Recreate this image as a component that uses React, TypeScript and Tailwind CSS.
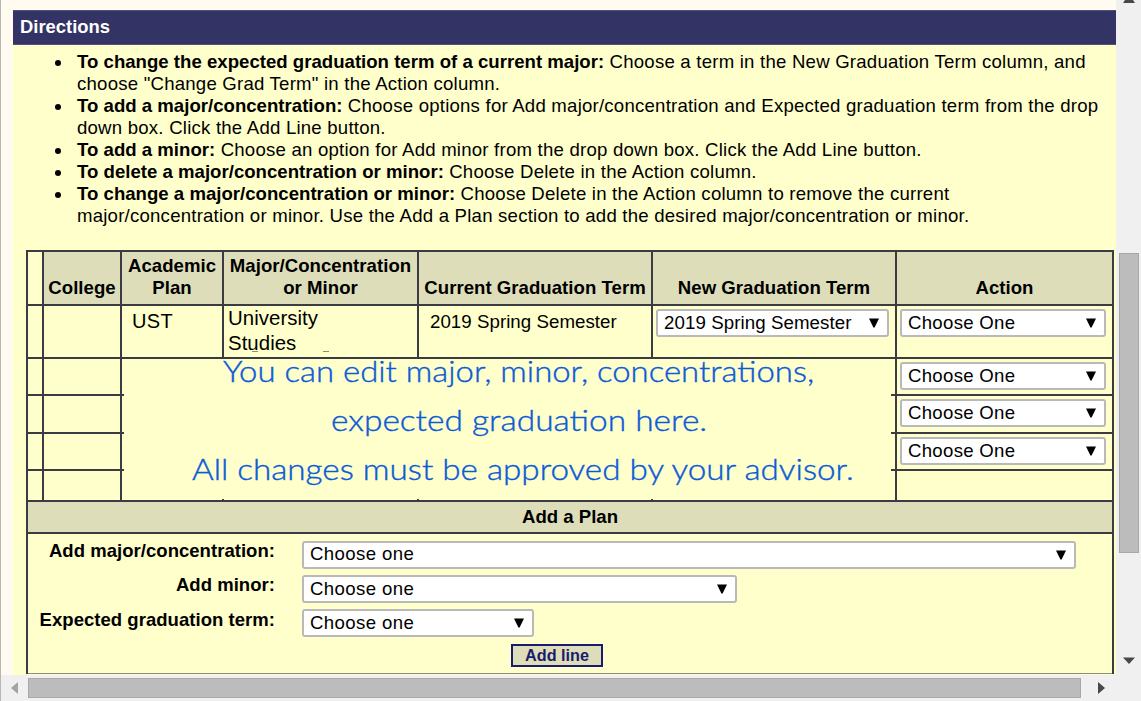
import type { ReactNode } from "react";

function Select({ label, className }: { label: string; className: string }) {
  return (
    <div
      className={`flex h-7 shrink-0 items-center justify-between rounded-[3px] border-2 border-[#b9b9b9] bg-white pl-1.5 pr-2 ${className}`}
    >
      <span className="-mt-px whitespace-nowrap">{label}</span>
      <svg width="10" height="10" viewBox="0 0 10 10">
        <path d="M0 0.5H10L5.6 9.5H4.4Z" fill="#000" />
      </svg>
    </div>
  );
}

function Cell({ className, children }: { className: string; children?: ReactNode }) {
  return <div className={`shrink-0 border-r-2 border-[#3b3b44] ${className}`}>{children}</div>;
}

const headerCell =
  "flex items-end justify-center bg-[#dddeb9] pb-[5px] text-center font-bold text-[18.6px] tracking-[0.03px]";

function Item({ title, children }: { title: string; children: ReactNode }) {
  return (
    <li className="relative whitespace-nowrap">
      <span className="absolute -left-[22px] top-[9px] size-1.5 rounded-full bg-black" />
      <b className="tracking-[0.01px]">{title}</b> {children}
    </li>
  );
}

function EmptyRow({ height, select }: { height: string; select: boolean }) {
  return (
    <div className={`flex border-b-2 border-[#3b3b44] ${height}`}>
      <Cell className="w-4" />
      <Cell className="w-[78px]" />
      <Cell className="w-[102px]" />
      <Cell className="w-[195px]" />
      <Cell className="w-[234px]" />
      <Cell className="w-[244px]" />
      <div className="flex-1 pl-[3px] pt-[3px] tracking-[0.3px]">
        {select && <Select label="Choose One" className="w-[206px]" />}
      </div>
    </div>
  );
}

function FormRow({ label, width }: { label: string; width: string }) {
  return (
    <div className="flex h-[34.4px]">
      <div className="-mt-px w-[247px] shrink-0 text-right text-[18.5px] font-bold tracking-[0.04px]">{label}</div>
      <div className="-mt-[0.4px] pl-[27px] tracking-[0.4px]">
        <Select label="Choose one" className={width} />
      </div>
    </div>
  );
}

export default function App() {
  return (
    <div className="flex h-[701px] w-[1141px] flex-col overflow-hidden border-l border-[#b8b8b0] bg-[#fffbf0] font-['Liberation_Sans',Arial,sans-serif] text-[18.6px] leading-[22px] tracking-[0.22px] text-black">
      <div className="flex h-[675px]">
        <main className="flex w-[1115px] shrink-0 flex-col overflow-hidden pl-3 pt-2.5">
          <div className="flex h-[35px] w-[1103px] shrink-0 items-center border-y border-[#50507c] bg-[#333366] pb-px pl-[7px] text-[18.4px] font-bold tracking-normal text-white">
            Directions
          </div>
          <section className="w-[1103px] flex-1 bg-[#ffffcc] pl-[13px] pt-1.5">
            <ul className="h-[199px] pl-[51px]">
              <Item title="To change the expected graduation term of a current major:">
                Choose a term in the New Graduation Term column, and
                <br />
                choose "Change Grad Term" in the Action column.
              </Item>
              <Item title="To add a major/concentration:">
                Choose options for Add major/concentration and Expected graduation term from the drop
                <br />
                down box. Click the Add Line button.
              </Item>
              <Item title="To add a minor:">
                Choose an option for Add minor from the drop down box. Click the Add Line button.
              </Item>
              <Item title="To delete a major/concentration or minor:">Choose Delete in the Action column.</Item>
              <Item title="To change a major/concentration or minor:">
                Choose Delete in the Action column to remove the current
                <br />
                major/concentration or minor. Use the Add a Plan section to add the desired major/concentration or minor.
              </Item>
            </ul>

            <div className="relative w-[1088px] border-x-2 border-t-2 border-[#3b3b44]">
              <div className="flex h-[54px] border-b-2 border-[#3b3b44]">
                <Cell className="w-4" />
                <Cell className={`w-[78px] ${headerCell}`}>College</Cell>
                <Cell className={`w-[102px] ${headerCell}`}>
                  Academic
                  <br />
                  Plan
                </Cell>
                <Cell className={`w-[195px] ${headerCell}`}>
                  Major/Concentration
                  <br />
                  or Minor
                </Cell>
                <Cell className={`w-[234px] ${headerCell}`}>Current Graduation Term</Cell>
                <Cell className={`w-[244px] ${headerCell}`}>New Graduation Term</Cell>
                <div className={`flex-1 ${headerCell}`}>Action</div>
              </div>

              <div className="flex h-[53px] border-b-2 border-[#3b3b44]">
                <Cell className="w-4" />
                <Cell className="w-[78px]" />
                <Cell className="w-[102px] pl-[10px] pt-[4px] text-[20px] tracking-[0.3px]">UST</Cell>
                <Cell className="w-[195px] pl-1 text-[20.4px] leading-[25px] tracking-[0.05px]">
                  University
                  <br />
                  Studies
                </Cell>
                <Cell className="w-[234px] pl-[11px] pt-[5px] text-[18.7px] tracking-[0.04px]">2019 Spring Semester</Cell>
                <Cell className="w-[244px] pl-[3px] pt-[3px] text-[18.7px] tracking-[0.08px]">
                  <Select label="2019 Spring Semester" className="w-[233px]" />
                </Cell>
                <div className="flex-1 pl-[3px] pt-[3px] tracking-[0.3px]">
                  <Select label="Choose One" className="w-[206px]" />
                </div>
              </div>

              <EmptyRow height="h-[37px]" select />
              <EmptyRow height="h-[38px]" select />
              <EmptyRow height="h-[37px]" select />
              <EmptyRow height="h-[31px]" select={false} />

              <div className="flex h-8 items-center justify-center border-b-2 border-[#3b3b44] bg-[#dddeb9] text-[18.6px] font-bold tracking-normal">
                Add a Plan
              </div>

              <div className="h-[140px] border-b border-[#8a8a86] pt-[7px]">
                <FormRow label="Add major/concentration:" width="w-[774px]" />
                <FormRow label="Add minor:" width="w-[435px]" />
                <FormRow label="Expected graduation term:" width="w-[232px]" />
                <div className="ml-[483px] flex h-[23px] w-[92px] items-center justify-center border-2 border-[#1b1b6d] bg-[#dddeb9] pb-0.5 text-[16.2px] font-bold tracking-normal text-[#1b1b6d]">
                  Add line
                </div>
              </div>

              <div className="absolute left-[96px] top-[107px] h-[140px] w-[767px] bg-[#ffffcc]" />
              <div className="absolute left-[224px] top-[99px] h-px w-1.5 bg-[#8f8f78]" />
              <div className="absolute left-[295px] top-[99px] h-px w-1.5 bg-[#8f8f78]" />
              <div className="absolute left-[96px] top-[94px] flex w-[767px] flex-col whitespace-nowrap font-['Lato',sans-serif] text-[30px] font-light leading-[49px] tracking-normal text-[#0b5bd7] [-webkit-text-stroke:0.4px_#0b5bd7]">
                <span className="ml-[99px] origin-left scale-x-[1.097]">You can edit major, minor, concentrations,</span>
                <span className="ml-[207px] origin-left scale-x-[1.115]">expected graduation here.</span>
                <span className="ml-[68px] origin-left scale-x-[1.107]">All changes must be approved by your advisor.</span>
              </div>
            </div>
          </section>
        </main>

        <div className="relative w-[25px] bg-[#f0f0f0]">
          <svg width="12" height="3" viewBox="0 0 12 3" className="absolute left-[7px] top-0">
            <path d="M2 0H10L12 3H0Z" fill="#484848" />
          </svg>
          <div className="ml-[3px] mt-[253px] h-[300px] w-5 border border-[#a8a8a8] bg-[#bcbcbc]" />
          <svg width="12" height="7" viewBox="0 0 12 7" className="ml-[7px] mt-[104px]">
            <path d="M0 0.5H12L6 7Z" fill="#484848" />
          </svg>
        </div>
      </div>

      <div className="flex h-[26px] items-center bg-[#f0f0f0]">
        <svg width="7" height="12" viewBox="0 0 7 12" className="ml-[10px]">
          <path d="M7 0V12L0 6Z" fill="#a3a3a3" />
        </svg>
        <div className="ml-[10px] h-5 w-[1053px] border border-[#a8a8a8] bg-[#bcbcbc]" />
        <svg width="7" height="12" viewBox="0 0 7 12" className="ml-[17px]">
          <path d="M0 0V12L7 6Z" fill="#484848" />
        </svg>
      </div>
    </div>
  );
}
